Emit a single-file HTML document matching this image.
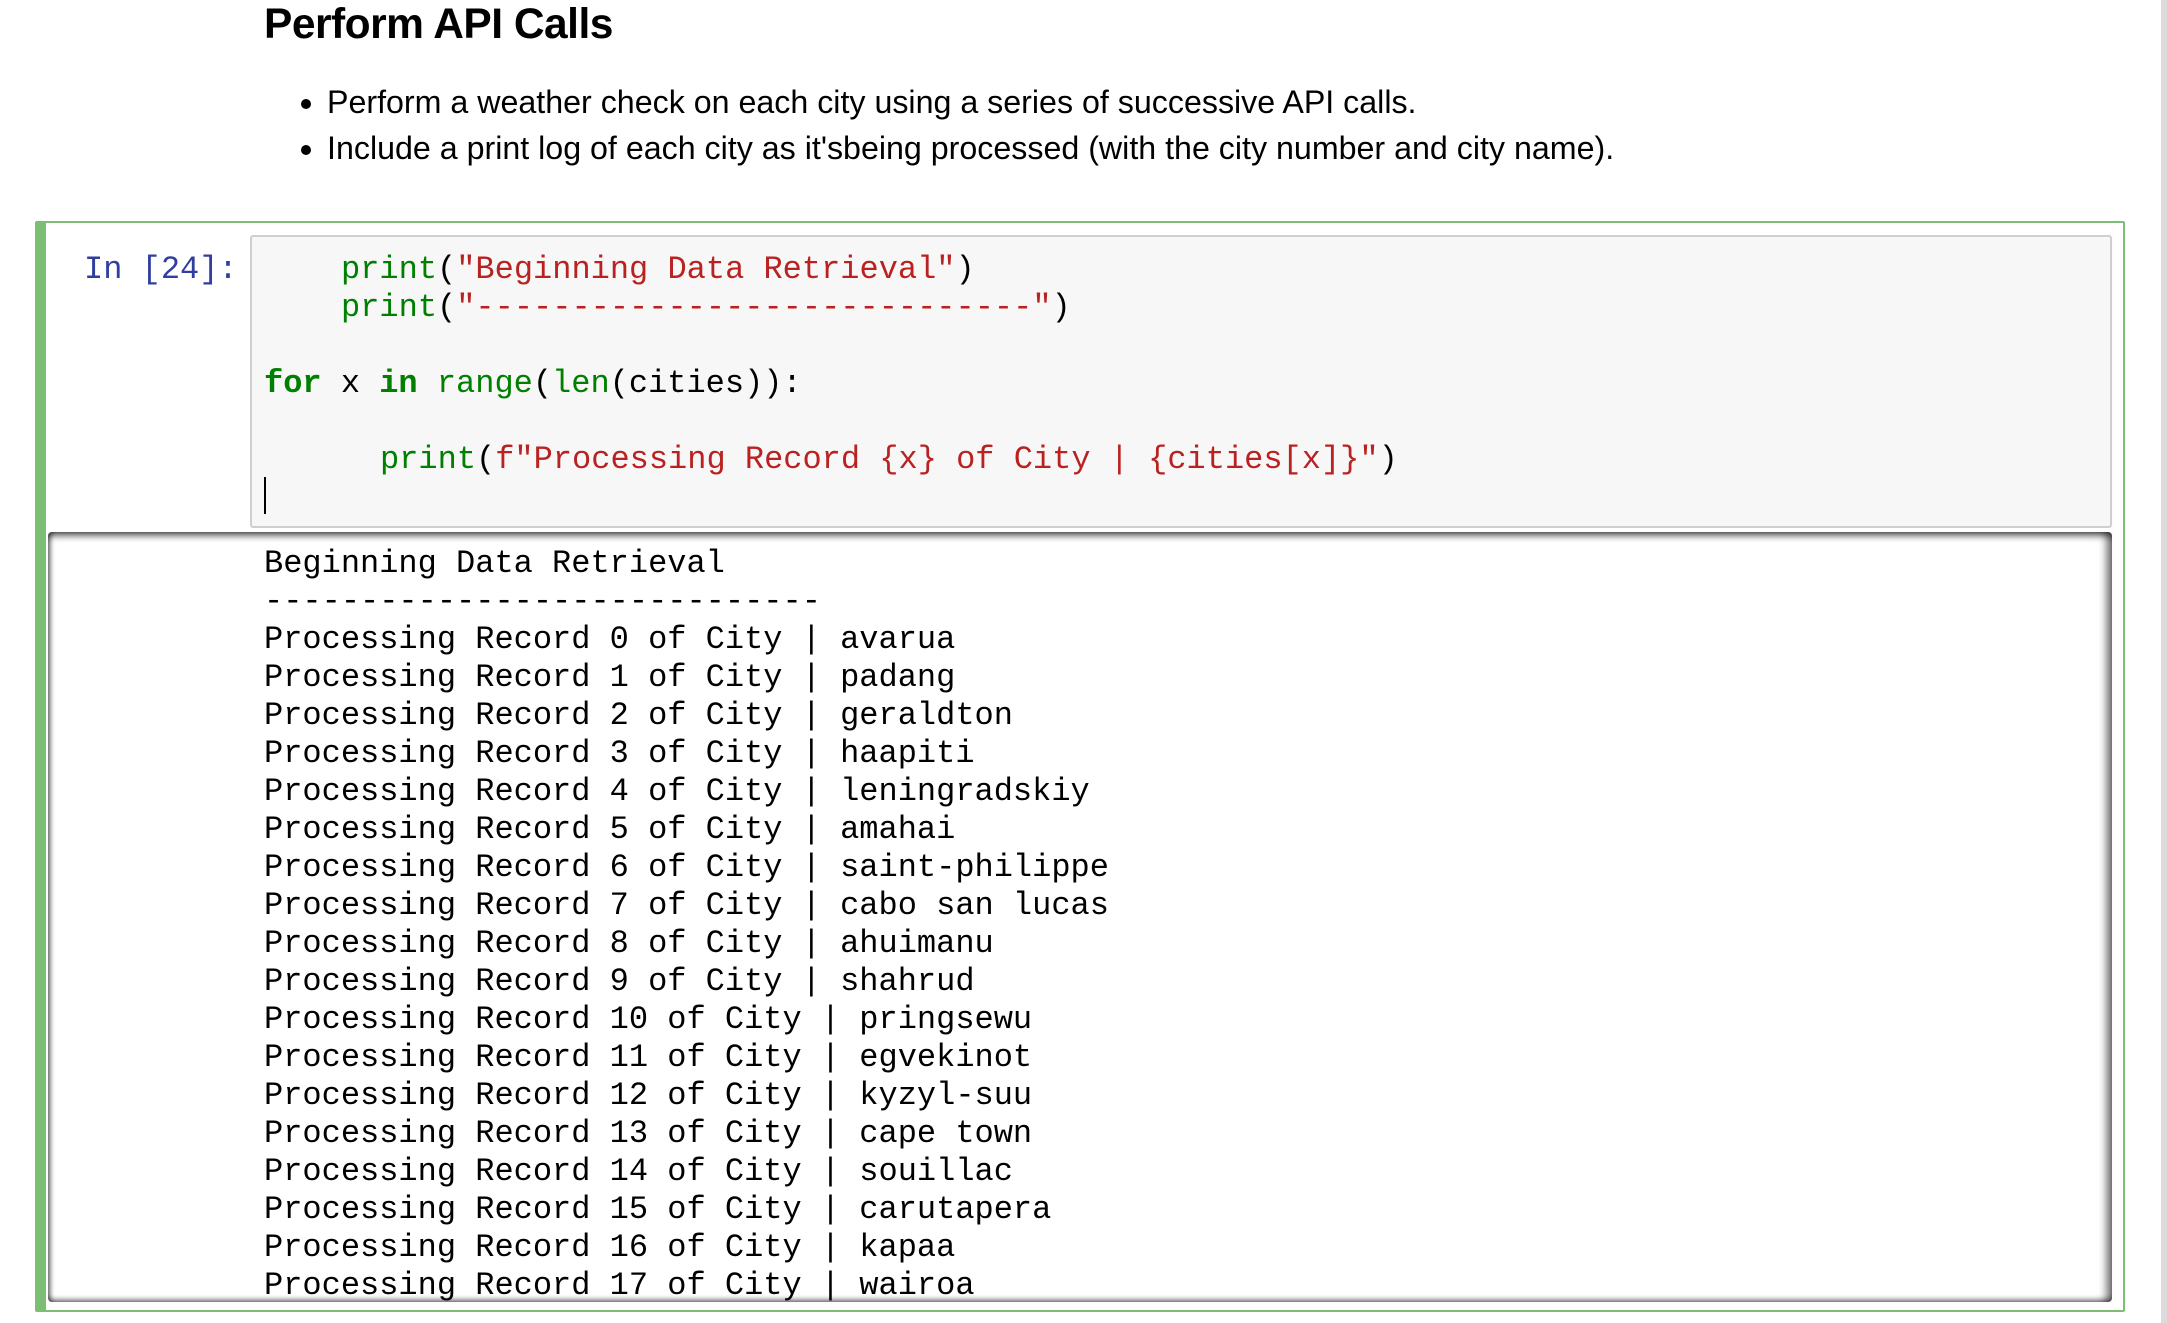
<!DOCTYPE html>
<html><head><meta charset="utf-8"><style>
html,body{margin:0;padding:0;background:#fff;width:2167px;height:1323px;overflow:hidden;position:relative;font-family:"Liberation Sans",Arial,sans-serif;}
.abs{position:absolute;}
h1{position:absolute;left:264px;top:1px;margin:0;font-size:42.5px;font-weight:bold;color:#000;letter-spacing:-0.5px;}
ul{position:absolute;left:280px;top:79px;margin:0;padding:0 0 0 47px;font-size:32.2px;line-height:46px;color:#000;}
.cell{left:35px;top:221px;width:2090px;height:1091px;border:2px solid #7cbf74;border-left:11px solid #7cbf74;box-sizing:border-box;border-radius:2px;}
.mono{font-family:"Liberation Mono","Courier New",monospace;font-size:32px;white-space:pre;}
.prompt{left:84px;top:251px;color:#303f9f;}
.input{left:250px;top:235px;width:1862px;height:293px;background:#f7f7f7;border:2px solid #cfcfcf;box-sizing:border-box;border-radius:3px;}
.code{line-height:38px;color:#000;}
.g{color:#008000}.b{color:#008000;font-weight:bold}.s{color:#ba2121}
.cursor{left:264px;top:477px;width:2px;height:37px;background:#000;}
.out{left:48px;top:532px;width:2064px;height:770px;background:#fff;border-radius:4px;box-shadow:inset 0 7px 7px -3px rgba(0,0,0,.6),inset -9px 0 8px -3px rgba(0,0,0,.5),inset 0 -5px 5px -2px rgba(0,0,0,.4),inset 4px 0 4px -1px rgba(0,0,0,.45);overflow:hidden;}
.outtext{left:216px;top:13px;line-height:38px;color:#000;}
.scroll{left:2161px;top:0;width:6px;height:1323px;background:#dcdcdc;}
</style></head><body>
<h1>Perform API Calls</h1>
<ul>
<li>Perform a weather check on each city using a series of successive API calls.</li>
<li>Include a print log of each city as it'sbeing processed (with the city number and city name).</li>
</ul>
<div class="abs cell"></div>
<div class="abs mono prompt">In [24]:</div>
<div class="abs input"></div>
<div class="abs mono code" style="left:341px;top:251px;"><span class="g">print</span>(<span class="s">"Beginning Data Retrieval"</span>)</div>
<div class="abs mono code" style="left:341px;top:289px;"><span class="g">print</span>(<span class="s">"-----------------------------"</span>)</div>
<div class="abs mono code" style="left:264px;top:365px;"><span class="b">for</span> x <span class="b">in</span> <span class="g">range</span>(<span class="g">len</span>(cities)):</div>
<div class="abs mono code" style="left:380px;top:441px;"><span class="g">print</span>(<span class="s">f"Processing Record {x} of City | {cities[x]}"</span>)</div>
<div class="abs cursor"></div>
<div class="abs out"><div class="abs mono outtext">Beginning Data Retrieval
-----------------------------
Processing Record 0 of City | avarua
Processing Record 1 of City | padang
Processing Record 2 of City | geraldton
Processing Record 3 of City | haapiti
Processing Record 4 of City | leningradskiy
Processing Record 5 of City | amahai
Processing Record 6 of City | saint-philippe
Processing Record 7 of City | cabo san lucas
Processing Record 8 of City | ahuimanu
Processing Record 9 of City | shahrud
Processing Record 10 of City | pringsewu
Processing Record 11 of City | egvekinot
Processing Record 12 of City | kyzyl-suu
Processing Record 13 of City | cape town
Processing Record 14 of City | souillac
Processing Record 15 of City | carutapera
Processing Record 16 of City | kapaa
Processing Record 17 of City | wairoa</div></div>
<div class="abs scroll"></div>
</body></html>
